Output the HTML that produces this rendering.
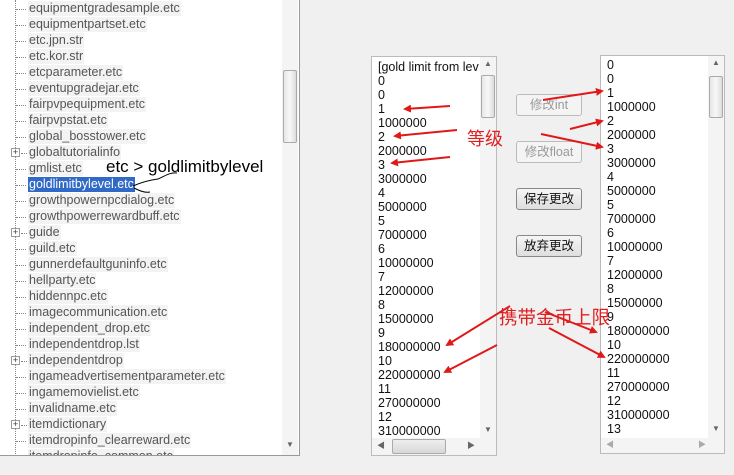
<!DOCTYPE html>
<html><head><meta charset="utf-8"><style>
*{margin:0;padding:0;box-sizing:border-box}
body{width:734px;height:475px;background:#f0f0f0;position:relative;overflow:hidden;font-family:"Liberation Sans","Noto Sans CJK SC",sans-serif;font-size:12px}
.abs{position:absolute}
#tree{left:0;top:0;width:300px;height:456px;background:#fff;border-right:1px solid #999;border-bottom:1px solid #999;overflow:hidden}
.it{position:absolute;left:28px;height:15px;line-height:15px;padding:0 1px;background:#f3f3f3;color:#555;white-space:nowrap;font-size:12.5px}
.h{position:absolute;left:16px;width:10px;border-top:1px dotted #888}
.pl{position:absolute;left:11px;width:9px;height:9px;border:1px solid #999;background:#fff;font-size:9px;line-height:7px;text-align:center;color:#333}
.vs{position:absolute;width:16px;background:#f4f4f4}
.thumb{position:absolute;left:1px;width:14px;border:1px solid #aaa;border-radius:2px;background:linear-gradient(90deg,#e6e6e6,#f8f8f8,#dcdcdc)}
.lb{background:#fff;border:1px solid #bbb;overflow:hidden}
.lb .t{position:absolute;left:6px;line-height:14px;color:#111;font-size:12.5px;white-space:pre}
.btn{position:absolute;left:516px;width:66px;height:22px;border:1px solid #888;border-radius:3px;background:linear-gradient(#f6f6f6,#dedede);text-align:center;line-height:20px;font-size:12.5px;color:#111}
.dis{color:#999;border-color:#bbb;background:#f4f4f4}
</style></head><body>
<div id="tree" class="abs">
<div class="abs" style="left:15px;top:0;height:456px;border-left:1px dotted #888"></div>
<div id="items"></div>
<div class="vs" style="left:282px;top:0;height:456px"><div class="thumb" style="top:70px;height:73px"></div><div class="abs" style="left:4px;top:440px;color:#666;font-size:8px">▼</div></div>
</div>
<div class="abs" style="left:106px;top:157px;font-size:17px;color:#000">etc &gt; goldlimitbylevel</div>

<div class="abs lb" style="left:371px;top:56px;width:126px;height:400px">
<div class="t" style="top:3px">[gold limit from lev
0
0
1
1000000
2
2000000
3
3000000
4
5000000
5
7000000
6
10000000
7
12000000
8
15000000
9
180000000
10
220000000
11
270000000
12
310000000</div>
<div class="vs" style="left:108px;top:0;height:381px"><div class="abs" style="left:4px;top:2px;font-size:8px;color:#666">▲</div><div class="thumb" style="top:18px;height:43px"></div><div class="abs" style="left:4px;top:368px;font-size:8px;color:#666">▼</div></div>
<div class="abs" style="left:0;top:381px;width:124px;height:17px;background:#f4f4f4"><div class="abs" style="left:5px;top:2px;font-size:8px;color:#666">◀</div><div class="abs" style="left:20px;top:1px;width:54px;height:15px;border:1px solid #aaa;border-radius:2px;background:linear-gradient(#eee,#d8d8d8)"></div><div class="abs" style="left:95px;top:2px;font-size:8px;color:#666">▶</div></div>
</div>

<div class="abs lb" style="left:600px;top:55px;width:125px;height:399px">
<div class="t" style="top:2px">0
0
1
1000000
2
2000000
3
3000000
4
5000000
5
7000000
6
10000000
7
12000000
8
15000000
9
180000000
10
220000000
11
270000000
12
310000000
13</div>
<div class="vs" style="left:107px;top:0;height:382px"><div class="abs" style="left:4px;top:2px;font-size:8px;color:#666">▲</div><div class="thumb" style="top:20px;height:42px"></div><div class="abs" style="left:4px;top:368px;font-size:8px;color:#666">▼</div></div>
<div class="abs" style="left:0;top:382px;width:123px;height:15px;background:#f4f4f4"><div class="abs" style="left:5px;top:1px;font-size:8px;color:#aaa">◀</div><div class="abs" style="left:97px;top:1px;font-size:8px;color:#aaa">▶</div></div>
</div>

<div class="btn dis" style="top:94px">修改int</div>
<div class="btn dis" style="top:141px">修改float</div>
<div class="btn" style="top:188px">保存更改</div>
<div class="btn" style="top:235px">放弃更改</div>

<div class="abs" style="left:467px;top:125px;font-size:18px;color:#e02020">等级</div>
<div class="abs" style="left:499px;top:304px;font-size:18.5px;color:#e02020">携带金币上限</div>

<svg class="abs" style="left:0;top:0" width="734" height="475">
<defs><marker id="a" markerWidth="8" markerHeight="8" refX="6" refY="4" orient="auto" markerUnits="userSpaceOnUse"><path d="M0,0L8,4L0,8z" fill="#e01818"/></marker></defs>
<g stroke="#e01818" stroke-width="2" fill="none" marker-end="url(#a)">
<line x1="450" y1="106" x2="405" y2="109"/>
<line x1="457" y1="130" x2="395" y2="136"/>
<line x1="450" y1="157" x2="392" y2="163"/>
<line x1="543" y1="100" x2="602" y2="91"/>
<line x1="570" y1="129" x2="602" y2="121"/>
<line x1="541" y1="134" x2="602" y2="147"/>
<line x1="510" y1="306" x2="447" y2="345"/>
<line x1="497" y1="345" x2="445" y2="372"/>
<line x1="545" y1="312" x2="596" y2="332"/>
<line x1="549" y1="328" x2="604" y2="357"/>
</g>
<path d="M133,186 C142,182 150,180 158,179 M134,188 C140,191 145,193 150,192" stroke="#000" stroke-width="1" fill="none"/>
<path d="M158,179 C165,176 170,172 177,173" stroke="#000" stroke-width="1" fill="none"/>
</svg>
<script>
var names=[["equipmentgradesample.etc"],["equipmentpartset.etc"],["etc.jpn.str"],["etc.kor.str"],["etcparameter.etc"],["eventupgradejar.etc"],["fairpvpequipment.etc"],["fairpvpstat.etc"],["global_bosstower.etc"],["globaltutorialinfo",1],["gmlist.etc"],["goldlimitbylevel.etc",2],["growthpowernpcdialog.etc"],["growthpowerrewardbuff.etc"],["guide",1],["guild.etc"],["gunnerdefaultguninfo.etc"],["hellparty.etc"],["hiddennpc.etc"],["imagecommunication.etc"],["independent_drop.etc"],["independentdrop.lst"],["independentdrop",1],["ingameadvertisementparameter.etc"],["ingamemovielist.etc"],["invalidname.etc"],["itemdictionary",1],["itemdropinfo_clearreward.etc"],["itemdropinfo_common.etc"]];
var h="";names.forEach(function(n,i){var y=1+i*16;
if(n[1]==1)h+='<div class="pl" style="top:'+(y+3)+'px">+</div><div class="h" style="left:21px;width:6px;top:'+(y+8)+'px"></div>';
else h+='<div class="h" style="top:'+(y+8)+'px"></div>';
h+='<div class="it" style="top:'+y+'px;'+(n[1]==2?'background:#3169c6;color:#fff;':'')+'">'+n[0]+'</div>';});
document.getElementById("items").innerHTML=h;
</script>
</body></html>
